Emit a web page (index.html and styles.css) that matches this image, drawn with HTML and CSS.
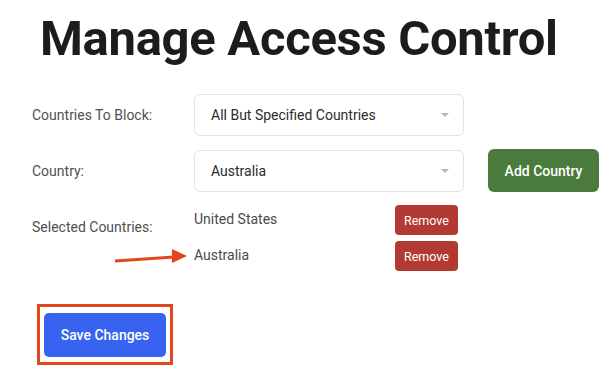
FILE: index.html
```html
<!DOCTYPE html>
<html lang="en">
<head>
    <meta charset="UTF-8">
    <meta name="viewport" content="width=device-width, initial-scale=1.0">
    <title>Manage Access Control</title>
    <link rel="stylesheet" href="styles.css">
</head>
<body>
    <div class="page">
        <h1>Manage Access Control</h1>

        <div class="form-row">
            <label class="form-label">Countries To Block:</label>
            <div class="select-box">
                <span>All But Specified Countries</span>
                <span class="caret"></span>
            </div>
        </div>

        <div class="form-row">
            <label class="form-label">Country:</label>
            <div class="select-box">
                <span>Australia</span>
                <span class="caret"></span>
            </div>
            <button class="btn btn-add">Add Country</button>
        </div>

        <div class="form-row">
            <label class="form-label">Selected Countries:</label>
            <ul class="selected-list">
                <li class="selected-item">
                    <span class="country-name">United States</span>
                    <button class="btn btn-remove">Remove</button>
                </li>
                <li class="selected-item">
                    <span class="country-name">Australia</span>
                    <button class="btn btn-remove">Remove</button>
                </li>
            </ul>
        </div>

        <div class="save-area">
            <button class="btn btn-save">Save Changes</button>
        </div>

        <!-- flecha de anotación -->
        <svg class="arrow" width="80" height="24" viewBox="0 0 80 24">
            <line x1="3" y1="16" x2="62" y2="12" stroke="#e2471d" stroke-width="3"/>
            <polygon points="60,4 75,11 60,18" fill="#e2471d"/>
        </svg>
    </div>
</body>
</html>
```

FILE: styles.css
```css
:root {
    --color-text: #1c1c1e;
    --color-label: #505054;
    --color-border: #e2e2e6;
    --color-green: #4a7a3c;
    --color-red: #b23a32;
    --color-blue: #3863f0;
    --color-note: #e2471d;
}

* {
    margin: 0;
    padding: 0;
    box-sizing: border-box;
    font-family: 'Roboto', 'Liberation Sans', sans-serif;
}

body {
    background-color: #ffffff;
    color: var(--color-text);
}

.page {
    position: relative;
    padding: 10px 0 0 32px;
}

h1 {
    font-size: 49px;
    font-weight: 700;
    line-height: 57px;
    letter-spacing: -0.3px;
    padding-left: 8px;
    margin-bottom: 27px;
}

.form-row {
    display: grid;
    grid-template-columns: 162px 270px auto;
    align-items: start;
    margin-bottom: 14px;
}

.form-label {
    font-size: 14px;
    color: var(--color-label);
    line-height: 42px;
}

.select-box {
    height: 42px;
    border: 1px solid var(--color-border);
    border-radius: 6px;
    padding: 0 16px;
    display: flex;
    align-items: center;
    justify-content: space-between;
    font-size: 14px;
    color: #2b2b2b;
}

.caret {
    width: 0;
    height: 0;
    border-left: 4px solid transparent;
    border-right: 4px solid transparent;
    border-top: 4px solid #b8b8bc;
    margin-right: -2px;
}

.btn {
    border: none;
    color: #ffffff;
    cursor: pointer;
}

.btn-add {
    width: 111px;
    height: 43px;
    margin: -1px 0 0 24px;
    background-color: var(--color-green);
    border-radius: 6px;
    font-size: 14px;
    font-weight: 500;
}

.selected-list {
    list-style: none;
    display: flex;
    flex-direction: column;
    gap: 6px;
    margin-top: -1px;
}

.selected-item {
    display: flex;
    align-items: center;
    height: 30px;
}

.country-name {
    width: 201px;
    font-size: 14px;
    color: #4a4a4e;
    margin-top: -3px;
}

.btn-remove {
    width: 63px;
    height: 30px;
    background-color: var(--color-red);
    border-radius: 4px;
    font-size: 12.5px;
}

.save-area {
    display: inline-block;
    margin: 19px 0 0 5px;
    padding: 6px 4px 5px;
    border: 3px solid var(--color-note);
}

.btn-save {
    width: 122px;
    height: 44px;
    background-color: var(--color-blue);
    border-radius: 5px;
    font-size: 14px;
    font-weight: 500;
}

.arrow {
    position: absolute;
    left: 112px;
    top: 245px;
}
```
